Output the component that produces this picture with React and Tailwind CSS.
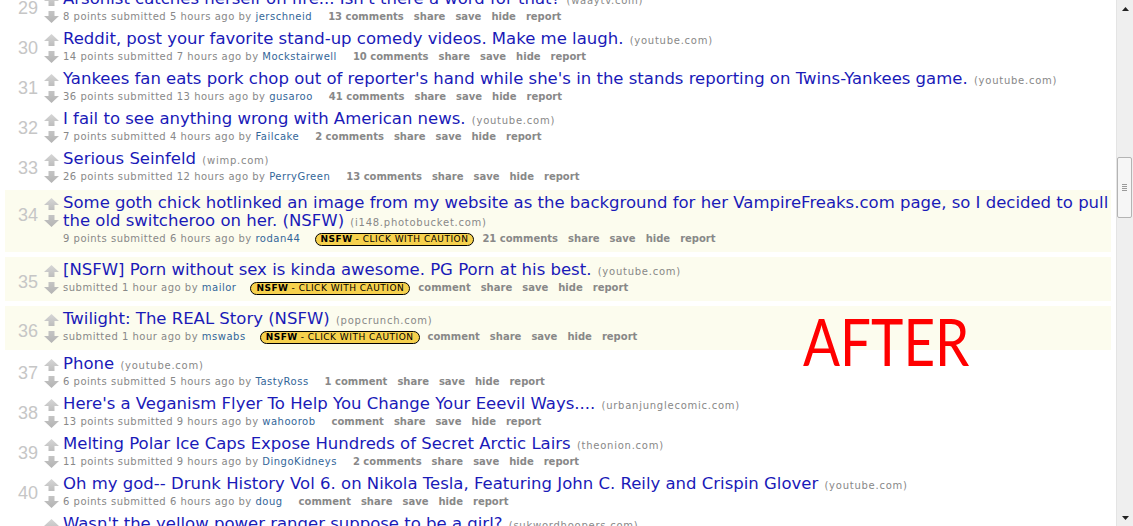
import React from "react";

const rows = [
  { n: 29, title: "Arsonist catches herself on fire... Isn't there a word for that?", domain: "waaytv.com", points: "8 points", time: "5 hours", author: "jerschneid", comments: "13 comments" },
  { n: 30, title: "Reddit, post your favorite stand-up comedy videos. Make me laugh.", domain: "youtube.com", points: "14 points", time: "7 hours", author: "Mockstairwell", comments: "10 comments" },
  { n: 31, title: "Yankees fan eats pork chop out of reporter's hand while she's in the stands reporting on Twins-Yankees game.", domain: "youtube.com", points: "36 points", time: "13 hours", author: "gusaroo", comments: "41 comments" },
  { n: 32, title: "I fail to see anything wrong with American news.", domain: "youtube.com", points: "7 points", time: "4 hours", author: "Failcake", comments: "2 comments" },
  { n: 33, title: "Serious Seinfeld", domain: "wimp.com", points: "26 points", time: "12 hours", author: "PerryGreen", comments: "13 comments" },
  { n: 34, title: "Some goth chick hotlinked an image from my website as the background for her VampireFreaks.com page, so I decided to pull the old switcheroo on her. (NSFW)", domain: "i148.photobucket.com", points: "9 points", time: "6 hours", author: "rodan44", comments: "21 comments", nsfw: true, first: true },
  { n: 35, title: "[NSFW] Porn without sex is kinda awesome. PG Porn at his best.", domain: "youtube.com", points: null, time: "1 hour", author: "mailor", comments: "comment", nsfw: true },
  { n: 36, title: "Twilight: The REAL Story (NSFW)", domain: "popcrunch.com", points: null, time: "1 hour", author: "mswabs", comments: "comment", nsfw: true },
  { n: 37, title: "Phone", domain: "youtube.com", points: "6 points", time: "5 hours", author: "TastyRoss", comments: "1 comment" },
  { n: 38, title: "Here's a Veganism Flyer To Help You Change Your Eeevil Ways....", domain: "urbanjunglecomic.com", points: "13 points", time: "9 hours", author: "wahoorob", comments: "comment" },
  { n: 39, title: "Melting Polar Ice Caps Expose Hundreds of Secret Arctic Lairs", domain: "theonion.com", points: "11 points", time: "9 hours", author: "DingoKidneys", comments: "2 comments" },
  { n: 40, title: "Oh my god-- Drunk History Vol 6. on Nikola Tesla, Featuring John C. Reily and Crispin Glover", domain: "youtube.com", points: "6 points", time: "6 hours", author: "doug", comments: "comment" },
  { n: 41, title: "Wasn't the yellow power ranger suppose to be a girl?", domain: "sukwordhoopers.com", points: "4 points", time: "3 hours", author: "ranger", comments: "5 comments" },
];

function Arrow({ down }) {
  return (
    <svg width="15" height="12" viewBox="0 0 15 12" className="block">
      <defs>
        <linearGradient id={down ? "gd" : "gu"} x1="0" y1="0" x2="0" y2="1">
          <stop offset="0" stopColor={down ? "#c4c4c4" : "#d6d6d6"} />
          <stop offset="1" stopColor={down ? "#b4b4b4" : "#bdbdbd"} />
        </linearGradient>
      </defs>
      {down ? (
        <polygon points="4.5,0 10.5,0 10.5,5 15,5 7.5,12 0,5 4.5,5" fill="url(#gd)" />
      ) : (
        <polygon points="7.5,0 15,7 10.5,7 10.5,12 4.5,12 4.5,7 0,7" fill="url(#gu)" />
      )}
    </svg>
  );
}

function Badge() {
  return (
    <span className="ml-[14px] inline-flex items-center h-[13px] px-[5px] rounded-full border border-black bg-[#f6d14d] text-[9px] leading-[11px] tracking-[0.5px] text-black font-['DejaVu_Sans',sans-serif] whitespace-nowrap">
      <span className="font-bold">NSFW</span>
      <span className="ml-[3px]">- CLICK WITH CAUTION</span>
    </span>
  );
}

function Row({ r }) {
  const btn = "font-bold text-[#888888] ml-[10px]";
  return (
    <div
      className={
        "flex " +
        (r.nsfw
          ? "bg-[#fcfcee] pt-[4px] pb-[4px] mb-[5px] " + (r.first ? "mt-[2px]" : "mt-px")
          : "mb-[4px]")
      }
    >
      <div
        className={
          "w-[35px] shrink-0 text-right pr-[2px] text-[18px] leading-[18px] text-[#c6c6c6] font-['Liberation_Sans',sans-serif] " +
          (r.nsfw ? "pt-[12px]" : "pt-[9px]")
        }
      >
        {r.n}
      </div>
      <div className="w-[22px] shrink-0 flex flex-col items-center pt-[4px] gap-[5px]">
        <Arrow />
        <Arrow down />
      </div>
      <div className="flex-1 pl-px min-w-0">
        <div className="text-[16.5px] leading-[18px] text-[#1a1ab8] font-['DejaVu_Sans',sans-serif]">
          {r.title}{" "}
          <span className="text-[10px] leading-none tracking-[0.75px] text-[#888888] ml-[1px]">({r.domain})</span>
        </div>
        <div className="flex items-center h-[18px] text-[10px] leading-none text-[#888888] font-['DejaVu_Sans',sans-serif] whitespace-nowrap">
          <span className="tracking-[0.5px]">
            {r.points ? r.points + " " : ""}submitted {r.time} ago by{" "}
            <span className="text-[#336699]">{r.author}</span>
          </span>
          {r.nsfw && <Badge />}
          <span className={"font-bold text-[#888888] " + (r.nsfw ? "ml-[8px]" : "ml-[16px]")}>{r.comments}</span>
          <span className={btn}>share</span>
          <span className={btn}>save</span>
          <span className={btn}>hide</span>
          <span className={btn}>report</span>
        </div>
      </div>
    </div>
  );
}

function Scrollbar() {
  return (
    <div className="w-[17px] shrink-0 h-full bg-[#efefef] border-l border-[#e4e4e4] flex flex-col items-center">
      <div className="h-[17px] w-full flex items-center justify-center">
        <svg width="7" height="4" viewBox="0 0 7 4"><polygon points="3.5,0 7,4 0,4" fill="#222" /></svg>
      </div>
      <div className="flex-1 w-full relative">
        <div className="absolute left-0 right-[1px] top-[140px] h-[61px] bg-[#f6f6f6] border border-[#b4b4b4] rounded-[2px] flex flex-col items-center justify-center gap-[1px]">
          <div className="w-[5px] h-px bg-[#9a9a9a]" />
          <div className="w-[5px] h-px bg-[#9a9a9a]" />
          <div className="w-[5px] h-px bg-[#9a9a9a]" />
          <div className="w-[5px] h-px bg-[#9a9a9a]" />
        </div>
      </div>
      <div className="h-[17px] w-full flex items-center justify-center">
        <svg width="7" height="4" viewBox="0 0 7 4"><polygon points="0,0 7,0 3.5,4" fill="#222" /></svg>
      </div>
    </div>
  );
}

export default function App() {
  return (
    <div className="w-[1133px] h-[526px] overflow-hidden flex bg-white">
      <div className="flex-1 relative overflow-hidden px-[5px]">
        <div className="mt-[-10px]">
          {rows.map((r) => (
            <Row key={r.n} r={r} />
          ))}
        </div>
        <div className="absolute left-[803px] top-[301px] text-[66px] leading-[80px] text-[#ff0000] font-['Lato',sans-serif] scale-x-[0.83] origin-left">
          AFTER
        </div>
      </div>
      <Scrollbar />
    </div>
  );
}
